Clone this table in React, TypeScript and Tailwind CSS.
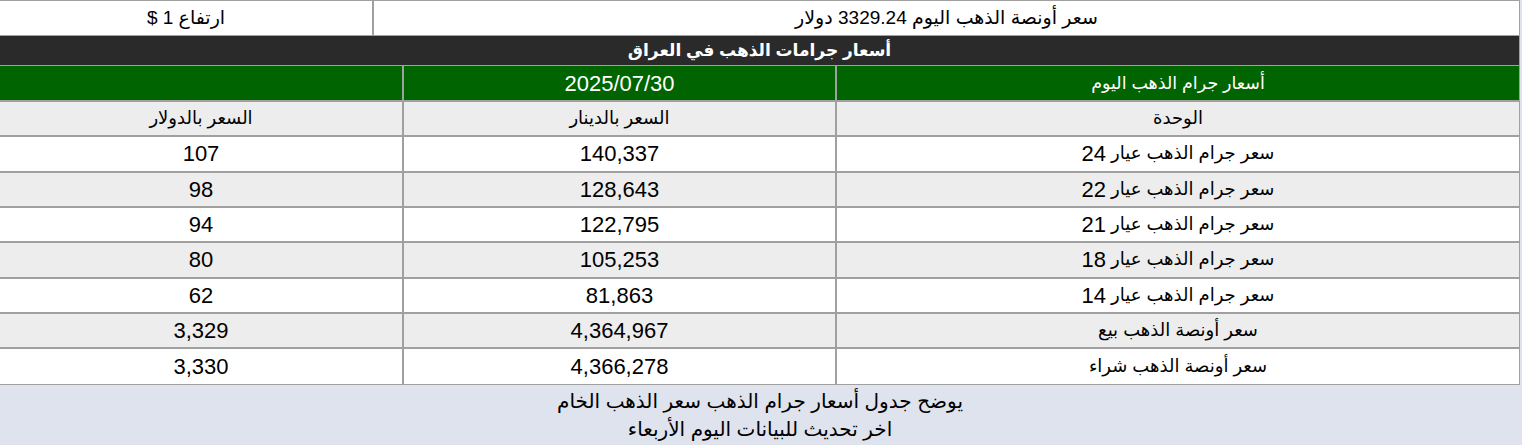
const rows = [
  { label: 'سعر جرام الذهب عيار', karat: '24', iqd: '140,337', usd: '107' },
  { label: 'سعر جرام الذهب عيار', karat: '22', iqd: '128,643', usd: '98' },
  { label: 'سعر جرام الذهب عيار', karat: '21', iqd: '122,795', usd: '94' },
  { label: 'سعر جرام الذهب عيار', karat: '18', iqd: '105,253', usd: '80' },
  { label: 'سعر جرام الذهب عيار', karat: '14', iqd: '81,863', usd: '62' },
  { label: 'سعر أونصة الذهب بيع', karat: '', iqd: '4,364,967', usd: '3,329' },
  { label: 'سعر أونصة الذهب شراء', karat: '', iqd: '4,366,278', usd: '3,330' },
];

const font = { fontFamily: '"Liberation Sans", "DejaVu Sans", Arial, sans-serif' };

export default function App() {
  return (
    <div style={font} className="min-h-[445px] bg-[#dfe3ee] text-black">
      <div dir="rtl" className="w-[1520px] border-t border-r border-[#a0a0a0]">
        {/* top info row */}
        <div className="grid grid-cols-[1147px_1fr] bg-white border-b border-[#a0a0a0] h-[35px] text-[19px]">
          <div className="border-l-2 border-[#a0a0a0] flex items-center justify-center">
            سعر أونصة الذهب اليوم 3329.24 دولار
          </div>
          <div className="flex items-center justify-center">ارتفاع 1 $</div>
        </div>

        {/* title */}
        <div className="h-[30px] bg-[#2a2a2a] border-b border-[#a0a0a0] text-white font-bold text-[17px] flex items-center justify-center">
          أسعار جرامات الذهب في العراق
        </div>

        {/* green row */}
        <div className="grid grid-cols-[684px_433px_1fr] h-[36px] bg-[#006400] text-white border-b-2 border-[#a0a0a0]">
          <div className="border-l-2 border-[#a0a0a0] flex items-center justify-center text-[17.5px]">أسعار جرام الذهب اليوم</div>
          <div className="border-l-2 border-[#a0a0a0] flex items-center justify-center text-[22px]">2025/07/30</div>
          <div />
        </div>

        {/* column headers */}
        <div className="grid grid-cols-[684px_433px_1fr] h-[35.33px] bg-[#ededed] border-b-2 border-[#a0a0a0] text-[18px]">
          <div className="border-l-2 border-[#a0a0a0] flex items-center justify-center">الوحدة</div>
          <div className="border-l-2 border-[#a0a0a0] flex items-center justify-center">السعر بالدينار</div>
          <div className="flex items-center justify-center">السعر بالدولار</div>
        </div>

        {rows.map((r, i) => (
          <div
            key={r.label + r.karat}
            className={`grid grid-cols-[684px_433px_1fr] h-[35.33px] text-[22px] ${
              i % 2 === 1 ? 'bg-[#ededed]' : 'bg-white'
            } ${i === rows.length - 1 ? 'border-b' : 'border-b-2'} border-[#a0a0a0]`}
          >
            <div className="border-l-2 border-[#a0a0a0] flex items-center justify-center gap-[5px]">
              <span className="text-[18px]">{r.label}</span>
              {r.karat && <span>{r.karat}</span>}
            </div>
            <div className="border-l-2 border-[#a0a0a0] flex items-center justify-center">{r.iqd}</div>
            <div className="flex items-center justify-center">{r.usd}</div>
          </div>
        ))}
      </div>

      {/* footer note */}
      <div dir="rtl" className="w-[1520px] pt-[2px] text-center text-[20px] leading-[28px]">
        <p>يوضح جدول أسعار جرام الذهب سعر الذهب الخام</p>
        <p>اخر تحديث للبيانات اليوم الأربعاء</p>
      </div>
    </div>
  );
}
